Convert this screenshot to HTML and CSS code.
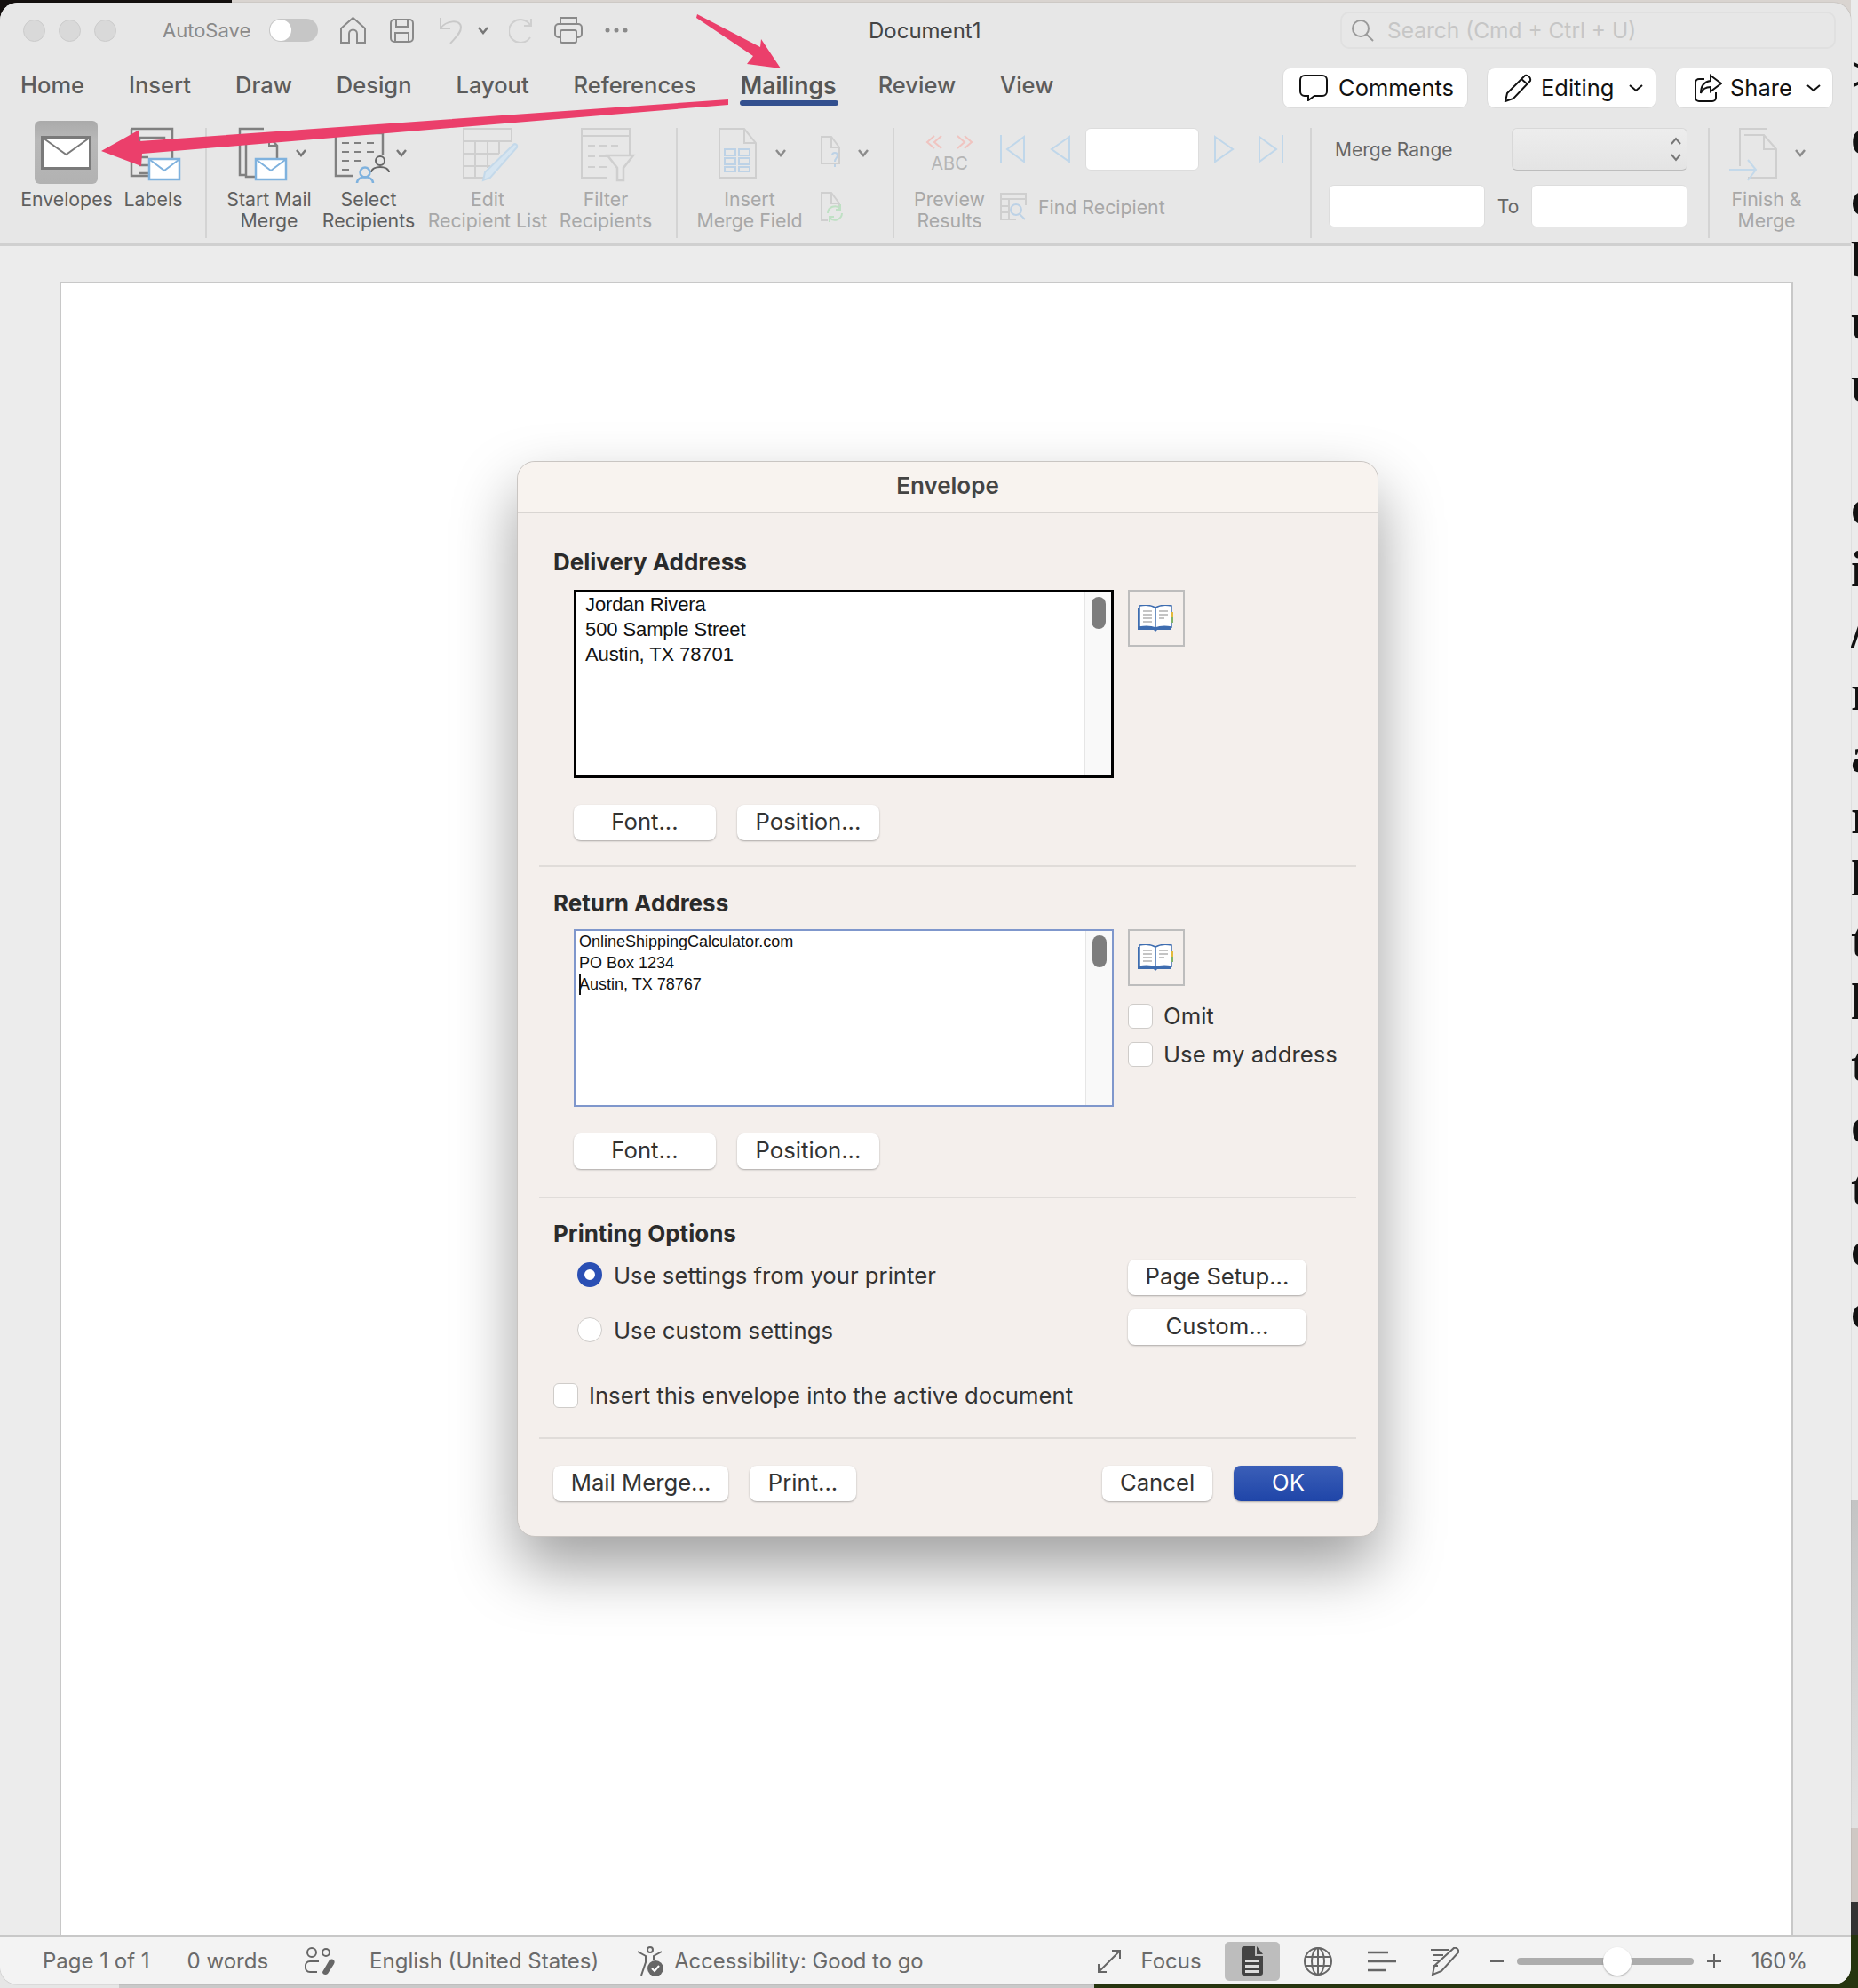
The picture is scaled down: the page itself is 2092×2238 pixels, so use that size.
FILE: index.html
```html
<!DOCTYPE html>
<html lang="en">
<head>
    <meta charset="UTF-8">
    <meta name="viewport" content="width=device-width, initial-scale=1.0">
    <title>Envelope - Document1</title>
    <link rel="stylesheet" href="styles.css">
</head>
<body>
    <div class="screen">
        <!-- what shows behind the window -->
        <div class="behind-top"></div>
        <div class="behind-bottom"></div>
        <div class="behind-right">
            <span>&gt;</span><span>o</span><span>c</span><span>b</span><span>u</span><span>u</span><span>&nbsp;</span><span>c</span><span>i</span><span>/</span><span>r</span><span>a</span><span>r</span><span>l</span><span>t</span><span>l</span><span>t</span><span>o</span><span>t</span><span>c</span><span>c</span>
        </div>

        <div class="window">
            <div class="titlebar">
                <span class="light"></span><span class="light"></span><span class="light"></span>
                <span class="autosave">AutoSave</span>
                <span class="toggle"><span class="knob"></span></span>
                <svg class="qa qa-home" width="29" height="30" viewBox="0 0 29 30" fill="none" stroke="#8a8a8a" stroke-width="2"><path d="M1 13 14.500 1 28 13v16H19V19a4.500 4.500 0 0 0-9 0v10H1z"/></svg>
                <svg class="qa qa-save" width="27" height="27" viewBox="0 0 27 27" fill="none" stroke="#8a8a8a" stroke-width="2"><rect x="1" y="1" width="25" height="25" rx="4"/><path d="M7 1v8h13V1M6 26V16h15v10"/></svg>
                <svg class="qa qa-undo" width="27" height="32" viewBox="0 0 27 32" fill="none" stroke="#c9c9c9" stroke-width="2"><path d="M2 2v12h11M2 14C8 5 25 3 25 13c0 6-6 11-12 18"/></svg>
                <svg class="qa qa-undo-more" width="16" height="10" viewBox="0 0 16 10" fill="none" stroke="#777" stroke-width="2.500"><path d="M3 2l5 6 5-6"/></svg>
                <svg class="qa qa-redo" width="27" height="28" viewBox="0 0 27 28" fill="none" stroke="#cfcfcf" stroke-width="2"><path d="M24 8A13 13 0 1 0 24 22M25 1v8h-8"/></svg>
                <svg class="qa qa-print" width="32" height="30" viewBox="0 0 32 30" fill="none" stroke="#8a8a8a" stroke-width="2"><rect x="1" y="8" width="30" height="15" rx="4"/><path d="M7 8V1h18v7"/><rect x="7" y="15" width="18" height="14" rx="2" fill="#e8e8e8"/></svg>
                <svg class="qa qa-dots" width="26" height="6" viewBox="0 0 26 6" fill="#8a8a8a"><circle cx="3" cy="3" r="2.500"/><circle cx="13" cy="3" r="2.500"/><circle cx="23" cy="3" r="2.500"/></svg>
                <span class="doc-title">Document1</span>
                <div class="search">
                    <svg width="26" height="26" viewBox="0 0 26 26" fill="none" stroke="#9a9a9a" stroke-width="2"><circle cx="11" cy="11" r="9"/><path d="M17.500 17.500 25 25"/></svg>
                    <span>Search (Cmd + Ctrl + U)</span>
                </div>
            </div>

            <div class="tabrow">
                <div class="tabs">
                    <span class="tab">Home</span>
                    <span class="tab">Insert</span>
                    <span class="tab">Draw</span>
                    <span class="tab">Design</span>
                    <span class="tab">Layout</span>
                    <span class="tab">References</span>
                    <span class="tab active">Mailings</span>
                    <span class="tab">Review</span>
                    <span class="tab">View</span>
                </div>
                <div class="top-buttons">
                    <div class="top-btn btn-comments">
                        <svg width="32" height="30" viewBox="0 0 32 30" fill="none" stroke="#111" stroke-width="2"><path d="M6 1h20a5 5 0 0 1 5 5v13a5 5 0 0 1-5 5H17l-7 5v-5H6a5 5 0 0 1-5-5V6a5 5 0 0 1 5-5z"/></svg>
                        <span>Comments</span>
                    </div>
                    <div class="top-btn btn-editing">
                        <svg width="32" height="32" viewBox="0 0 32 32" fill="none" stroke="#111" stroke-width="2"><path d="M24 2c3-1 7 2 6 6L11 28l-9 3 2-9zM20 6l7 6"/></svg>
                        <span>Editing</span>
                        <svg class="chev" width="18" height="10" viewBox="0 0 18 10" fill="none" stroke="#111" stroke-width="2"><path d="M2 2l7 6 7-6"/></svg>
                    </div>
                    <div class="top-btn btn-share">
                        <svg width="31" height="32" viewBox="0 0 31 32" fill="none" stroke="#111" stroke-width="2"><path d="M11 6H5a4 4 0 0 0-4 4v17a4 4 0 0 0 4 4h15a4 4 0 0 0 4-4v-6"/><path d="M18 2l12 9-12 9v-5c-5 0-9 2-11 7 0-8 4-13 11-14z"/></svg>
                        <span>Share</span>
                        <svg class="chev" width="18" height="10" viewBox="0 0 18 10" fill="none" stroke="#111" stroke-width="2"><path d="M2 2l7 6 7-6"/></svg>
                    </div>
                </div>
            </div>

            <div class="ribbon">
                <div class="rb rb-envelopes">
                    <div class="rb-pressed">
                        <svg width="57" height="38" viewBox="0 0 57 38" fill="#fff" stroke="#7a7a7a" stroke-width="3"><rect x="1.500" y="1.500" width="54" height="35"/><path d="M2 2l26.500 19L55 2" fill="none" stroke-width="2"/></svg>
                    </div>
                    <span class="rb-label">Envelopes</span>
                </div>
                <div class="rb rb-labels">
                    <svg width="75" height="72" viewBox="135 136 75 72" fill="none" stroke="#808080" stroke-width="2.500"><path d="M148 145h46v34M148 145v53h20"/><path d="M157 155h28v13h-28zM157 177h10M157 186h10M157 195h10"/><rect x="168" y="179" width="34" height="23" fill="#fff" stroke="#7fb2de"/><path d="M169 180l16 12 16-12" stroke="#7fb2de" stroke-width="2"/></svg>
                    <span class="rb-label">Labels</span>
                </div>
                <div class="rb-sep sep-1"></div>
                <div class="rb rb-start">
                    <svg width="120" height="72" viewBox="243 136 120 72" fill="none" stroke="#808080" stroke-width="2.500"><path d="M297 145h-27v52h6"/><path d="M277 154h26l9 10v20M277 154v45h10"/><path d="M303 154v10h9" stroke-width="2"/><rect x="288" y="179" width="34" height="23" fill="#fff" stroke="#7fb2de"/><path d="M289 180l16 12 16-12" stroke="#7fb2de" stroke-width="2"/><path d="M334 169l5 6 5-6" stroke="#777"/></svg>
                    <span class="rb-label">Start Mail<br>Merge</span>
                </div>
                <div class="rb rb-select">
                    <svg width="104" height="72" viewBox="363 136 104 72" fill="none" stroke="#808080" stroke-width="2.500"><path d="M431 150v24M378 150h53M378 150v48h20"/><path d="M385 161h8M399 161h8M413 161h8M385 171h8M399 171h8M413 171h8M385 181h8M399 181h8M385 191h8" stroke-width="2"/><circle cx="428" cy="181" r="5" stroke="#666" stroke-width="2"/><path d="M418 194c1-8 19-8 20 0" stroke="#666" stroke-width="2"/><circle cx="411" cy="194" r="5.500" stroke="#7fb2de"/><path d="M402 206c0-9 18-9 18 0" stroke="#7fb2de"/><path d="M447 169l5 6 5-6" stroke="#777"/></svg>
                    <span class="rb-label">Select<br>Recipients</span>
                </div>
                <div class="rb rb-edit off">
                    <svg width="164" height="72" viewBox="467 136 164 72" fill="none" stroke="#cfcfcf" stroke-width="2"><path d="M522 145h54v14h-54zM522 159v41h28M522 173h40M522 187h30M535 159v41M549 159v30M562 159v14"/><path d="M578 163c2-2 5 0 4 3l-30 34-8 3 2-9z" fill="#d6e5f1" stroke="#c4d9ea"/></svg>
                    <span class="rb-label">Edit<br>Recipient List</span>
                </div>
                <div class="rb rb-filter off">
                    <svg width="102" height="72" viewBox="631 136 102 72" fill="none" stroke="#cfcfcf" stroke-width="2"><path d="M655 145h54v8h-54zM655 153v47h28M709 153v21"/><path d="M662 164h8M675 164h8M688 164h8M662 176h8M675 176h8M662 188h8M675 188h8"/><path d="M684 175h29l-11 14v14h-7v-14z" fill="#e8e8e8" stroke-width="2.500"/></svg>
                    <span class="rb-label">Filter<br>Recipients</span>
                </div>
                <div class="rb-sep sep-2"></div>
                <div class="rb rb-insert off">
                    <svg width="118" height="72" viewBox="785 136 118 72" fill="none" stroke="#cfcfcf" stroke-width="2"><path d="M810 145h28l13 16v39h-41zM838 145v16h13"/><path d="M816 168h12v7h-12zM832 168h12v7h-12zM816 178h12v7h-12zM832 178h12v7h-12zM816 188h12v5h-12zM832 188h12v5h-12z" stroke="#bdd2e6"/><path d="M874 169l5 6 5-6" stroke="#8c8c8c" stroke-width="2.500"/></svg>
                    <span class="rb-label">Insert<br>Merge Field</span>
                </div>
                <div class="rb-small-col">
                    <svg width="85" height="72" viewBox="903 136 85 72" fill="none" stroke="#cfcfcf" stroke-width="2"><path d="M925 154h11l9 12v18h-20zM936 154v12h9"/><path d="M937 175c0-4 6-4 6 0 0 3-3 3-3 7M940 185v3" stroke="#bdd2e6"/><path d="M967 169l5 6 5-6" stroke="#8c8c8c" stroke-width="2.500"/></svg>
                    <svg width="85" height="44" viewBox="903 208 85 44" fill="none" stroke="#cfcfcf" stroke-width="2"><path d="M932 248h-7v-31h11l9 12v4M936 217v12h9"/><path d="M932 240a8 8 0 0 1 14-5M948 240a8 8 0 0 1-14 5M946 230v6h-5M934 250v-6h5" stroke="#bfe0c4"/></svg>
                </div>
                <div class="rb-sep sep-3"></div>
                <div class="rb rb-preview off">
                    <svg width="78" height="72" viewBox="1030 136 78 72" fill="none" stroke="#f0c4c0" stroke-width="2"><path d="M1052 153l-8 7 8 7M1060 153l-8 7 8 7M1078 153l8 7-8 7M1086 153l8 7-8 7"/></svg>
                    <span class="abc">ABC</span>
                    <span class="rb-label">Preview<br>Results</span>
                </div>
                <div class="rb-nav">
                    <div class="nav-row">
                        <svg width="29" height="32" viewBox="0 0 29 32" fill="none" stroke="#c0d7ea" stroke-width="2"><path d="M1 0v32M27 2 8 16l19 14z"/></svg>
                        <svg class="nav-prev" width="24" height="32" viewBox="0 0 24 32" fill="none" stroke="#c0d7ea" stroke-width="2"><path d="M22 2 2 16l20 14z"/></svg>
                        <div class="nav-input"></div>
                        <svg class="nav-next" width="24" height="32" viewBox="0 0 24 32" fill="none" stroke="#c0d7ea" stroke-width="2"><path d="M2 2l20 14L2 30z"/></svg>
                        <svg class="nav-last" width="29" height="32" viewBox="0 0 29 32" fill="none" stroke="#c0d7ea" stroke-width="2"><path d="M28 0v32M2 2l19 14L2 30z"/></svg>
                    </div>
                    <div class="find-row">
                        <svg width="30" height="31" viewBox="0 0 30 31" fill="none" stroke="#cfcfcf" stroke-width="2"><path d="M1 1h28v6H1zM1 7v23h17M29 7v7M1 15h8M1 22h8M10 7v23"/><circle cx="18" cy="19" r="6" stroke="#bdd2e6"/><path d="M22 24l6 6" stroke="#bdd2e6"/></svg>
                        <span>Find Recipient</span>
                    </div>
                </div>
                <div class="rb-sep sep-4"></div>
                <div class="rb-merge">
                    <div class="merge-top">
                        <span class="merge-label">Merge Range</span>
                        <div class="merge-spinner">
                            <svg width="14" height="30" viewBox="0 0 14 30" fill="none" stroke="#777" stroke-width="2"><path d="M2 9l5-6 5 6M2 21l5 6 5-6"/></svg>
                        </div>
                    </div>
                    <div class="merge-bottom">
                        <div class="merge-input"></div>
                        <span class="merge-to">To</span>
                        <div class="merge-input"></div>
                    </div>
                </div>
                <div class="rb-sep sep-5"></div>
                <div class="rb rb-finish off">
                    <svg width="100" height="72" viewBox="1939 136 100 72" fill="none" stroke="#cfcfcf" stroke-width="2"><path d="M1989 145h-30v42M1964 152h22l14 16v32h-32"/><path d="M1986 152v16h14"/><path d="M1947 191h30M1968 180l9 11-9 12" stroke="#c4d9ea"/><path d="M2022 169l5 6 5-6" stroke="#8c8c8c" stroke-width="2.500"/></svg>
                    <span class="rb-label">Finish &amp;<br>Merge</span>
                </div>
            </div>

            <div class="doc-area">
                <div class="page"></div>
            </div>

            <div class="statusbar">
                <span class="st-page">Page 1 of 1</span>
                <span class="st-words">0 words</span>
                <svg class="st-people" width="34" height="32" viewBox="0 0 34 32" fill="none" stroke="#666" stroke-width="2"><circle cx="8" cy="6" r="5"/><circle cx="24" cy="6" r="4"/><path d="M16 16H6c-7 0-7 12 0 12h8"/><path d="M32 14c2 1 2 3 1 5l-7 11c-2 2-6 1-6-2l7-12c1-2 3-3 5-2z" fill="#666" stroke="none"/></svg>
                <span class="st-lang">English (United States)</span>
                <svg class="st-a11y" width="31" height="34" viewBox="0 0 31 34" fill="none" stroke="#666" stroke-width="2"><circle cx="15" cy="4" r="3"/><path d="M1 6l9 5v7l-5 15M28 6l-9 5v4"/><circle cx="21" cy="25" r="9" fill="#666" stroke="none"/><path d="M17 25l3 3 5-6" stroke="#fff"/></svg>
                <span class="st-a11y-text">Accessibility: Good to go</span>
                <svg class="st-focus-icon" width="26" height="26" viewBox="0 0 26 26" fill="none" stroke="#666" stroke-width="2"><path d="M25 1 1 25M16 1h9v9M1 16v9h9"/></svg>
                <span class="st-focus">Focus</span>
                <div class="st-view">
                    <svg width="24" height="33" viewBox="0 0 24 33" fill="#444"><path d="M3 0h12v11h9v19a3 3 0 0 1-3 3H3a3 3 0 0 1-3-3V3a3 3 0 0 1 3-3z"/><path d="M17 0l7 9h-7z"/><path d="M4 15h16v3H4zM4 21h16v3H4zM4 27h16v3H4z" fill="#ddd"/></svg>
                </div>
                <svg class="st-globe" width="32" height="32" viewBox="0 0 32 32" fill="none" stroke="#666" stroke-width="2"><circle cx="16" cy="16" r="15"/><ellipse cx="16" cy="16" rx="7" ry="15"/><path d="M16 1v30M2 11h28M2 21h28"/></svg>
                <svg class="st-lines" width="32" height="24" viewBox="0 0 32 24" fill="none" stroke="#666" stroke-width="2.500"><path d="M0 2h23M0 12h32M0 22h21"/></svg>
                <svg class="st-draft" width="32" height="32" viewBox="0 0 32 32" fill="none" stroke="#666" stroke-width="2"><path d="M0 3h20M2 9h12M2 15h10M2 21h6"/><path d="M26 1c3-1 6 2 5 5L12 27l-10 4 2-10z"/></svg>
                <span class="st-minus"></span>
                <div class="st-slider"><span class="st-thumb"></span></div>
                <svg class="st-plus" width="16" height="16" viewBox="0 0 16 16" stroke="#666" stroke-width="2"><path d="M0 8h16M8 0v16"/></svg>
                <span class="st-zoom">160%</span>
            </div>
        </div>

        <div class="dialog">
            <div class="dialog-title">Envelope</div>

            <section class="dlg-section sec-delivery">
                <h3>Delivery Address</h3>
                <div class="addr-row">
                    <div class="addr-box box-delivery">
                        <div class="addr-text">Jordan Rivera<br>500 Sample Street<br>Austin, TX 78701</div>
                        <div class="addr-scroll"><span></span></div>
                    </div>
                    <div class="book-btn">
                        <svg width="40" height="30" viewBox="0 0 40 30"><path d="M0 3h38v25H22l-2 2-2-2H0z" fill="#3e6db0"/><path d="M2 1c6-1 13-1 18 2v23c-5-2-12-2-18-1zM38 1c-6-1-13-1-18 2v23c5-2 12-2 18-1z" fill="#fff" stroke="#3e6db0" stroke-width="1.500"/><path d="M6 7h10M6 11h10M6 15h10M6 19h10M24 7h10M24 11h10M24 15h6" stroke="#c4c4c4" stroke-width="2"/><path d="M37 8h3v6h-3z" fill="#e2b93b"/><path d="M37 14h3v6h-3z" fill="#7fb26a"/></svg>
                    </div>
                </div>
                <div class="addr-btns">
                    <div class="btn btn-font">Font...</div>
                    <div class="btn btn-position">Position...</div>
                </div>
            </section>
            <div class="dlg-divider"></div>

            <section class="dlg-section sec-return">
                <h3>Return Address</h3>
                <div class="addr-row">
                    <div class="addr-box box-return">
                        <div class="addr-text small">OnlineShippingCalculator.com<br>PO Box 1234<br><span class="caret"></span>Austin, TX 78767</div>
                        <div class="addr-scroll"><span></span></div>
                    </div>
                    <div class="side-col">
                        <div class="book-btn">
                            <svg width="40" height="30" viewBox="0 0 40 30"><path d="M0 3h38v25H22l-2 2-2-2H0z" fill="#3e6db0"/><path d="M2 1c6-1 13-1 18 2v23c-5-2-12-2-18-1zM38 1c-6-1-13-1-18 2v23c5-2 12-2 18-1z" fill="#fff" stroke="#3e6db0" stroke-width="1.500"/><path d="M6 7h10M6 11h10M6 15h10M6 19h10M24 7h10M24 11h10M24 15h6" stroke="#c4c4c4" stroke-width="2"/><path d="M37 8h3v6h-3z" fill="#e2b93b"/><path d="M37 14h3v6h-3z" fill="#7fb26a"/></svg>
                        </div>
                        <label class="check check-omit"><span class="box"></span>Omit</label>
                        <label class="check check-my"><span class="box"></span>Use my address</label>
                    </div>
                </div>
                <div class="addr-btns">
                    <div class="btn btn-font">Font...</div>
                    <div class="btn btn-position">Position...</div>
                </div>
            </section>
            <div class="dlg-divider"></div>

            <section class="dlg-section sec-print">
                <h3>Printing Options</h3>
                <div class="print-row">
                    <div class="print-radios">
                        <label class="radio"><span class="dot on"></span>Use settings from your printer</label>
                        <label class="radio"><span class="dot"></span>Use custom settings</label>
                    </div>
                    <div class="print-btns">
                        <div class="btn btn-wide">Page Setup...</div>
                        <div class="btn btn-wide">Custom...</div>
                    </div>
                </div>
                <label class="check check-insert"><span class="box"></span>Insert this envelope into the active document</label>
            </section>
            <div class="dlg-divider"></div>

            <div class="dlg-footer">
                <div class="btn btn-mail">Mail Merge...</div>
                <div class="btn btn-print">Print...</div>
                <div class="btn btn-cancel">Cancel</div>
                <div class="btn btn-ok">OK</div>
            </div>
        </div>

        <!-- annotation arrows -->
        <svg class="arrows" width="2092" height="300" viewBox="0 0 2092 300" fill="#eb3f6b">
            <path d="M785 16 856 53 857 44 879 77 841 72 848 63 784 20z"/>
            <path d="M820 112 157 159 157 146 114 170 159 187 160 173 820 118z"/>
        </svg>
    </div>
</body>
</html>
```

FILE: styles.css
```css
* {
    box-sizing: border-box;
}

body {
    margin: 0;
    font-family: Inter, "Noto Sans", sans-serif;
    background-color: #e9e9e9;
}

.screen {
    position: relative;
    width: 2092px;
    height: 2238px;
    overflow: hidden;
    padding-top: 3px;
}

.behind-top {
    position: absolute;
    left: 0;
    top: 0;
    width: 100%;
    height: 24px;
    background: linear-gradient(90deg, #14100f 261px, #d9d4d0 261px);
}

.behind-bottom {
    position: absolute;
    left: 0;
    bottom: 0;
    width: 100%;
    height: 24px;
    background: linear-gradient(90deg, #e6e6e6 134px, #c9c9c9 134px, #c9c9c9 1232px, #26350f 1232px);
}

.behind-right {
    position: absolute;
    left: 2084px;
    top: 0;
    width: 8px;
    height: 2238px;
    overflow: hidden;
    background: linear-gradient(180deg, #ebebeb 1689px, #c4c4c4 1689px, #e2e2e2 2058px, #cfc8c4 2058px, #cfc8c4 2141px, #333 2141px, #333 2178px, #26350f 2178px);
    padding-top: 49px;
    font-family: "Liberation Serif", serif;
    font-weight: bold;
    font-size: 58px;
    color: #111;
}

.behind-right span {
    display: block;
    height: 69.6px;
    line-height: 69.6px;
    white-space: nowrap;
}

.window {
    position: relative;
    width: 2084px;
    height: 2231px;
    background-color: #ebebeb;
    border-radius: 20px;
    overflow: hidden;
    display: flex;
    flex-direction: column;
    box-shadow: 0 0 1px rgba(0, 0, 0, 0.5);
}

/* title bar */
.titlebar {
    height: 62px;
    flex-shrink: 0;
    background-color: #e7e7e7;
    display: flex;
    align-items: center;
    padding-left: 26px;
    padding-right: 17px;
}

.light {
    width: 25px;
    height: 25px;
    border-radius: 50%;
    background-color: #d9d9d9;
    border: 1px solid #cbcbcb;
    margin-right: 15px;
}

.autosave {
    margin-left: 37px;
    font-size: 22px;
    color: #8a8a8a;
    width: 100px;
    white-space: nowrap;
}

.toggle {
    margin-left: 20px;
    width: 55px;
    height: 26px;
    border-radius: 13px;
    background-color: #c6c6c6;
    padding: 1px;
}

.knob {
    display: block;
    width: 24px;
    height: 24px;
    border-radius: 50%;
    background-color: #fff;
}

.qa {
    flex-shrink: 0;
}

.qa-home { margin-left: 25px; }
.qa-save { margin-left: 27px; }
.qa-undo { margin-left: 28px; }
.qa-undo-more { margin-left: 15px; }
.qa-redo { margin-left: 21px; }
.qa-print { margin-left: 24px; }
.qa-dots { margin-left: 25px; }

.doc-title {
    margin-left: 271px;
    font-size: 24px;
    color: #444;
    white-space: nowrap;
}

.search {
    margin-left: auto;
    width: 558px;
    height: 42px;
    border: 2px solid #e0e0e0;
    border-radius: 10px;
    display: flex;
    align-items: center;
    padding-left: 10px;
    gap: 15px;
    font-size: 24.5px;
    color: #c6c6c6;
    white-space: nowrap;
}

/* tabs */
.tabrow {
    height: 65px;
    flex-shrink: 0;
    background-color: #e7e7e7;
    display: flex;
    align-items: center;
    padding-left: 23px;
    padding-right: 20px;
}

.tabs {
    display: flex;
    gap: 50px;
    margin-bottom: 4px;
    font-size: 25.5px;
    color: #5c5c5c;
}

.tab {
    position: relative;
    white-space: nowrap;
    font-weight: 500;
}

.tab.active {
    margin-right: -3px;
    font-size: 26.5px;
    font-weight: 600;
    color: #555;
}

.tab.active::after {
    content: "";
    position: absolute;
    left: -1px;
    right: -2px;
    bottom: -7px;
    height: 6px;
    border-radius: 3px;
    background-color: #33508f;
}

.top-buttons {
    margin-left: auto;
    margin-top: 2px;
    display: flex;
    gap: 21px;
}

.top-btn {
    height: 46px;
    background-color: #fff;
    border: 1px solid #dcdcdc;
    border-radius: 9px;
    display: flex;
    align-items: center;
    font-size: 25.5px;
    color: #111;
    white-space: nowrap;
}

.btn-comments {
    width: 209px;
    padding-left: 18px;
    gap: 12px;
}

.btn-editing {
    width: 191px;
    padding-left: 18px;
    gap: 10px;
}

.btn-share {
    width: 178px;
    padding-left: 21px;
    gap: 9px;
}

.top-btn .chev {
    margin-left: 6px;
}

/* ribbon */
.ribbon {
    height: 147px;
    flex-shrink: 0;
    background-color: #e7e7e7;
    border-bottom: 3px solid #d0d0d0;
    display: flex;
    padding-left: 15px;
    padding-top: 6px;
}

.rb {
    position: relative;
    display: flex;
    flex-direction: column;
    align-items: center;
    flex-shrink: 0;
}

.rb svg {
    display: block;
}

.rb-label {
    margin-top: 4px;
    font-size: 21.3px;
    line-height: 24px;
    text-align: center;
    color: #5f5f5f;
    white-space: nowrap;
}

.off .rb-label {
    color: #a8a8a8;
}

.rb-envelopes { width: 120px; }
.rb-labels { width: 75px; }
.rb-start { width: 120px; }
.rb-select { width: 104px; }
.rb-edit { width: 164px; }
.rb-filter { width: 102px; }
.rb-insert { width: 118px; }
.rb-preview { width: 78px; }
.rb-finish { width: 100px; margin-left: 14px; }

.rb-pressed {
    width: 71px;
    height: 71px;
    margin-bottom: 1px;
    margin-right: 2px;
    border-radius: 6px;
    background: linear-gradient(180deg, #aaaaaa, #b8b8b8 30%, #b2b2b2);
    display: flex;
    align-items: center;
    justify-content: center;
}

.rb-sep {
    width: 2px;
    height: 124px;
    margin-top: 8px;
    background-color: #d4d4d4;
    flex-shrink: 0;
}

.sep-1 { margin-left: 21px; margin-right: 10px; }
.sep-2 { margin-left: 28px; margin-right: 22px; }
.sep-3 { margin-left: 17px; margin-right: 23px; }
.sep-4 { margin-left: 23px; }

.rb-small-col {
    width: 85px;
    flex-shrink: 0;
    display: flex;
    flex-direction: column;
}

.rb-small-col svg {
    display: block;
}

.abc {
    position: absolute;
    top: 36px;
    left: 0;
    right: 0;
    text-align: center;
    font-size: 20px;
    line-height: 24px;
    color: #b5b5b5;
}

.rb-nav {
    width: 344px;
    flex-shrink: 0;
    padding-left: 18px;
}

.nav-row {
    display: flex;
    align-items: center;
    height: 48px;
    margin-top: 8px;
}

.nav-prev { margin-left: 27px; }
.nav-next { margin-left: 16px; }
.nav-last { margin-left: 26px; }

.nav-input {
    margin-left: 16px;
    width: 128px;
    height: 48px;
    background-color: #fff;
    border: 1px solid #ddd;
    border-radius: 6px;
}

.find-row {
    margin-top: 25px;
    display: flex;
    align-items: center;
    gap: 13px;
    font-size: 21.3px;
    color: #a8a8a8;
    white-space: nowrap;
}

.rb-merge {
    width: 446px;
    flex-shrink: 0;
    padding: 8px 23px 0 19px;
}

.merge-top {
    display: flex;
    align-items: center;
    justify-content: space-between;
    height: 48px;
}

.merge-label {
    margin-left: 7px;
    font-size: 21px;
    color: #666;
    white-space: nowrap;
}

.merge-spinner {
    width: 198px;
    height: 48px;
    border: 1px solid #d8d8d8;
    border-bottom-color: #bdbdbd;
    border-radius: 6px;
    background: linear-gradient(180deg, #ededed, #e4e4e4);
    display: flex;
    align-items: center;
    justify-content: flex-end;
    padding-right: 5px;
}

.merge-bottom {
    display: flex;
    align-items: center;
    justify-content: space-between;
    margin-top: 16px;
}

.merge-input {
    width: 176px;
    height: 48px;
    background-color: #fff;
    border: 1px solid #ddd;
    border-radius: 6px;
}

.merge-to {
    font-size: 21px;
    color: #666;
}

/* document */
.doc-area {
    flex: 1;
    min-height: 0;
    overflow: hidden;
    background-color: #ececec;
    padding: 40px 65px 0 67px;
}

.page {
    height: 100%;
    background-color: #fff;
    border: 2px solid #c8c8c8;
    border-bottom: 0;
}

/* status bar */
.statusbar {
    height: 56px;
    flex-shrink: 0;
    background-color: #f3f3f3;
    border-top: 3px solid #c8c8c8;
    display: flex;
    align-items: center;
    padding-left: 48px;
    font-size: 24px;
    color: #6a6a6a;
    white-space: nowrap;
}

.statusbar svg {
    flex-shrink: 0;
}

.st-words { margin-left: 42px; }
.st-people { margin-left: 41px; }
.st-lang { margin-left: 39px; }
.st-a11y { margin-left: 43px; }
.st-a11y-text { margin-left: 11px; font-size: 23.8px; }
.st-focus-icon { margin-left: auto; }
.st-focus { margin-left: 22px; }
.st-globe { margin-left: 27px; }
.st-lines { margin-left: 40px; }
.st-draft { margin-left: 39px; }
.st-plus { margin-left: 15px; }
.st-zoom { margin-left: 34px; margin-right: 49px; }

.st-view {
    margin-left: 26px;
    width: 62px;
    height: 44px;
    border-radius: 5px;
    background-color: #bdbdbd;
    display: flex;
    align-items: center;
    justify-content: center;
}

.st-minus {
    margin-left: 35px;
    width: 15px;
    height: 2px;
    background-color: #666;
}

.st-slider {
    position: relative;
    margin-left: 15px;
    width: 199px;
    height: 8px;
    border-radius: 4px;
    background-color: #adadad;
}

.st-thumb {
    position: absolute;
    left: 97px;
    top: -12px;
    width: 32px;
    height: 32px;
    border-radius: 50%;
    background-color: #fff;
    box-shadow: 0 1px 2px rgba(0, 0, 0, 0.3);
}

/* dialog */
.dialog {
    position: absolute;
    left: 582px;
    top: 519px;
    width: 970px;
    height: 1211px;
    background-color: #f4efec;
    border-radius: 20px;
    border: 1px solid #c9c5c2;
    box-shadow: 0 34px 70px rgba(0, 0, 0, 0.38);
    overflow: visible;
    color: #333;
    font-size: 25.7px;
}

.dialog-title {
    height: 58px;
    border-bottom: 2px solid #d9d5d2;
    border-radius: 20px 20px 0 0;
    background-color: #f8f3ef;
    text-align: center;
    line-height: 54px;
    font-size: 26px;
    font-weight: 600;
    color: #444;
}

.dlg-section {
    padding-left: 40px;
}

.dlg-section h3 {
    margin: 0;
    font-size: 26px;
    line-height: 30px;
    font-weight: 700;
    color: #2b2b2b;
}

.sec-delivery { padding-top: 40px; padding-bottom: 28px; }
.sec-return { padding-top: 26px; padding-bottom: 31px; }
.sec-print { padding-top: 25px; padding-bottom: 32px; }

.dlg-divider {
    height: 2px;
    margin: 0 24px;
    background-color: #e0dcd9;
}

.addr-row {
    display: flex;
    align-items: flex-start;
    gap: 16px;
    margin-top: 16px;
    margin-left: 23px;
}

.sec-return .addr-row {
    margin-top: 14px;
}

.addr-box {
    width: 608px;
    background-color: #fff;
    display: flex;
    justify-content: space-between;
    flex-shrink: 0;
}

.box-delivery {
    height: 212px;
    border: 3px solid #000;
}

.box-return {
    height: 200px;
    border: 2px solid #7f97cc;
}

.addr-text {
    padding: 0 0 0 10px;
    font-family: "Liberation Sans", sans-serif;
    font-size: 22px;
    line-height: 28px;
    letter-spacing: -0.1px;
    color: #111;
    white-space: nowrap;
}

.addr-text.small {
    padding: 0 0 0 4px;
    font-size: 18px;
    line-height: 24px;
    letter-spacing: 0;
}

.caret {
    display: inline-block;
    width: 2px;
    height: 24px;
    margin-right: -2px;
    vertical-align: -6px;
    background-color: #111;
}

.addr-scroll {
    width: 30px;
    background-color: #f9f9f9;
    border-left: 1px solid #e6e6e6;
    padding: 5px 7px;
}

.addr-scroll span {
    display: block;
    width: 16px;
    height: 36px;
    border-radius: 8px;
    background-color: #7d7d7d;
}

.book-btn {
    width: 64px;
    height: 64px;
    border: 2px solid #bdbdbd;
    padding: 15px 0 0 9px;
}

.book-btn svg {
    display: block;
}

.side-col {
    display: flex;
    flex-direction: column;
}

.check {
    display: flex;
    align-items: center;
    gap: 12px;
    font-size: 25.7px;
    color: #333;
    white-space: nowrap;
}

.check .box {
    width: 28px;
    height: 28px;
    flex-shrink: 0;
    background-color: #fff;
    border: 1px solid #cfccc9;
    border-radius: 6px;
}

.check-omit { margin-top: 18px; }
.check-my { margin-top: 12px; }

.check-insert {
    margin-top: 41px;
}

.addr-btns {
    display: flex;
    gap: 24px;
    margin-top: 30px;
    margin-left: 23px;
}

.btn {
    height: 40px;
    background-color: #fff;
    border-radius: 8px;
    box-shadow: 0 1px 2px rgba(0, 0, 0, 0.3);
    text-align: center;
    line-height: 38px;
    font-size: 25.7px;
    color: #333;
    white-space: nowrap;
}

.btn-font,
.btn-position {
    width: 160px;
}

.print-row {
    display: flex;
    justify-content: space-between;
    padding-right: 80px;
}

.print-radios {
    display: flex;
    flex-direction: column;
    gap: 34px;
    margin-top: 17px;
    margin-left: 27px;
}

.radio {
    display: flex;
    align-items: center;
    gap: 13px;
    height: 28px;
    font-size: 25.7px;
    color: #333;
    white-space: nowrap;
}

.dot {
    width: 28px;
    height: 28px;
    flex-shrink: 0;
    border-radius: 50%;
    background-color: #fff;
    border: 1px solid #cfccc9;
}

.dot.on {
    border: 8px solid #2a4fb4;
}

.print-btns {
    display: flex;
    flex-direction: column;
    gap: 16px;
    margin-top: 14px;
}

.btn-wide {
    width: 201px;
}

.dlg-footer {
    display: flex;
    gap: 24px;
    padding: 30px 39px 0 40px;
}

.btn-mail { width: 197px; }
.btn-print { width: 120px; }
.btn-cancel { width: 124px; margin-left: auto; }

.btn-ok {
    width: 123px;
    background: linear-gradient(180deg, #3b5fb8, #1f45a8);
    color: #fff;
}

.arrows {
    position: absolute;
    left: 0;
    top: 0;
}
```
